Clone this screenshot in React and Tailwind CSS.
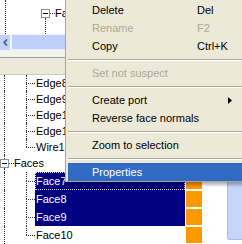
import React from "react";

const edges = ["Edge8", "Edge9", "Edge10", "Edge11", "Wire12"];
const faces = ["Face7", "Face8", "Face9", "Face10"];

function Branch({ last, half }) {
  return (
    <div className="w-[9px] shrink-0 flex flex-col">
      <div className={`${half} border-l border-dotted border-[#333]`} />
      <div className={`${half} border-t border-dotted border-[#333] ${last ? "" : "border-l"}`} />
    </div>
  );
}

function Rail() {
  return (
    <div className="w-[26px] shrink-0 pl-[4px]">
      <div className="h-full border-l border-dotted border-[#333]" />
    </div>
  );
}

function MenuItem({ label, keys, disabled, active, arrow }) {
  return (
    <div
      className={`flex h-[18px] items-center ${active ? "bg-[#316AC5] text-white" : ""} ${
        disabled ? "text-[#ACA899]" : ""
      }`}
    >
      <span className="w-[129px] pl-[24px] whitespace-nowrap">{label}</span>
      {keys && <span className="whitespace-nowrap">{keys}</span>}
      {arrow && (
        <svg className="ml-auto mr-[10px]" width="4" height="7" viewBox="0 0 4 7">
          <polygon points="0,0 4,3.5 0,7" fill="#000" />
        </svg>
      )}
    </div>
  );
}

function Sep() {
  return (
    <div className="h-[9px] pt-[4px]">
      <div className="border-t border-b border-t-[#ACA899] border-b-white" />
    </div>
  );
}

export default function App() {
  return (
    <div className="relative w-[242px] h-[244px] overflow-hidden bg-white text-[11px] leading-none text-black font-['Liberation_Sans',Arial,sans-serif]">
      {/* upper tree */}
      <div className="h-[34px] flex">
        <div className="w-[41px] shrink-0 pl-[5px]">
          <div className="h-full border-l border-dotted border-[#333]" />
        </div>
        <div className="w-[9px] shrink-0 flex flex-col">
          <div className="h-[9px]" />
          <div className="w-[9px] h-[9px] border border-[#8C9296] bg-white flex items-center justify-center">
            <div className="w-[5px] h-px bg-black" />
          </div>
          <div className="flex-1 ml-[4px] border-l border-dotted border-[#333]" />
        </div>
        <div className="w-[5px] shrink-0 h-[14px] border-b border-dotted border-[#333]" />
        <div className="h-[26px] flex items-center whitespace-nowrap">Faces</div>
      </div>

      {/* horizontal scrollbar */}
      <div className="h-[16px] flex bg-[#F4F3EE] border-t border-[#F0F3FD]">
        <div className="w-[10px] shrink-0 bg-[#C2D3FB] flex items-center justify-center">
          <svg width="5" height="7" viewBox="0 0 5 7">
            <polyline points="4,0.5 1.2,3.5 4,6.5" fill="none" stroke="#4D6185" strokeWidth="1.8" />
          </svg>
        </div>
        <div className="w-[2px] shrink-0 bg-[#F3F6FE]" />
        <div className="flex-1 bg-[#BDD0FA] border-b border-[#E8EEFD]" />
      </div>

      {/* panel strip */}
      <div className="h-[7px] bg-[#F3F2EB]" />
      <div className="h-px bg-[#8D9FA6]" />
      <div className="h-[16px] bg-[#ECE9D8]" />
      <div className="h-px bg-[#CFCBBE]" />

      {/* lower tree */}
      <div className="flex h-[169px]">
        <div className="flex-1 flex flex-col">
          {edges.map((e, i) => (
            <div key={e} className="flex h-[16px]">
              <Rail />
              <Branch last={i === edges.length - 1} half="h-[8px]" />
              <div className="w-[150px] shrink-0 flex items-center pl-[1px] whitespace-nowrap">{e}</div>
            </div>
          ))}
          <div className="flex h-[17px]">
            <div className="w-[9px] shrink-0 flex flex-col">
              <div className="h-[4px] ml-[4px] border-l border-dotted border-[#333]" />
              <div className="w-[9px] h-[9px] border border-[#8C9296] bg-white flex items-center justify-center">
                <div className="w-[5px] h-px bg-black" />
              </div>
              <div className="flex-1 ml-[4px] border-l border-dotted border-[#333]" />
            </div>
            <div className="w-[5px] shrink-0 h-[9px] border-b border-dotted border-[#333]" />
            <div className="flex items-center whitespace-nowrap">Faces</div>
          </div>
          {faces.map((f, i) => {
            const sel = i < 3;
            return (
              <div key={f} className="flex h-[18px]">
                <Rail />
                <Branch last={i === faces.length - 1} half="h-[9px]" />
                <div
                  className={`w-[150px] shrink-0 flex items-center border whitespace-nowrap ${
                    sel ? "bg-[#000080] text-white" : ""
                  } ${i === 0 ? "border-dotted border-[#D8D8F0]" : "border-transparent"}`}
                >
                  {f}
                </div>
                <div className="w-[16px] shrink-0 ml-[1px] py-[1px]">
                  <div className="h-full bg-[#FF9900]" />
                </div>
              </div>
            );
          })}
        </div>
        <div className="w-[15px] shrink-0 flex flex-col">
          <div className="flex-1 mb-[4px] bg-[#C6D6FB] border-l border-b border-[#A9BCE8] rounded-bl-[3px]" />
        </div>
      </div>

      {/* context menu */}
      <div className="absolute left-[65px] top-[-2px] w-[180px] bg-[#ECE9D8] border border-[#ACA899] px-[2px] pt-[2px] shadow-[2px_3px_3px_rgba(0,0,0,0.3)]">
        <MenuItem label="Delete" keys="Del" />
        <MenuItem label="Rename" keys="F2" disabled />
        <MenuItem label="Copy" keys="Ctrl+K" />
        <Sep />
        <MenuItem label="Set not suspect" disabled />
        <Sep />
        <MenuItem label="Create port" arrow />
        <MenuItem label="Reverse face normals" />
        <Sep />
        <MenuItem label="Zoom to selection" />
        <Sep />
        <MenuItem label="Properties" active />
      </div>
    </div>
  );
}
